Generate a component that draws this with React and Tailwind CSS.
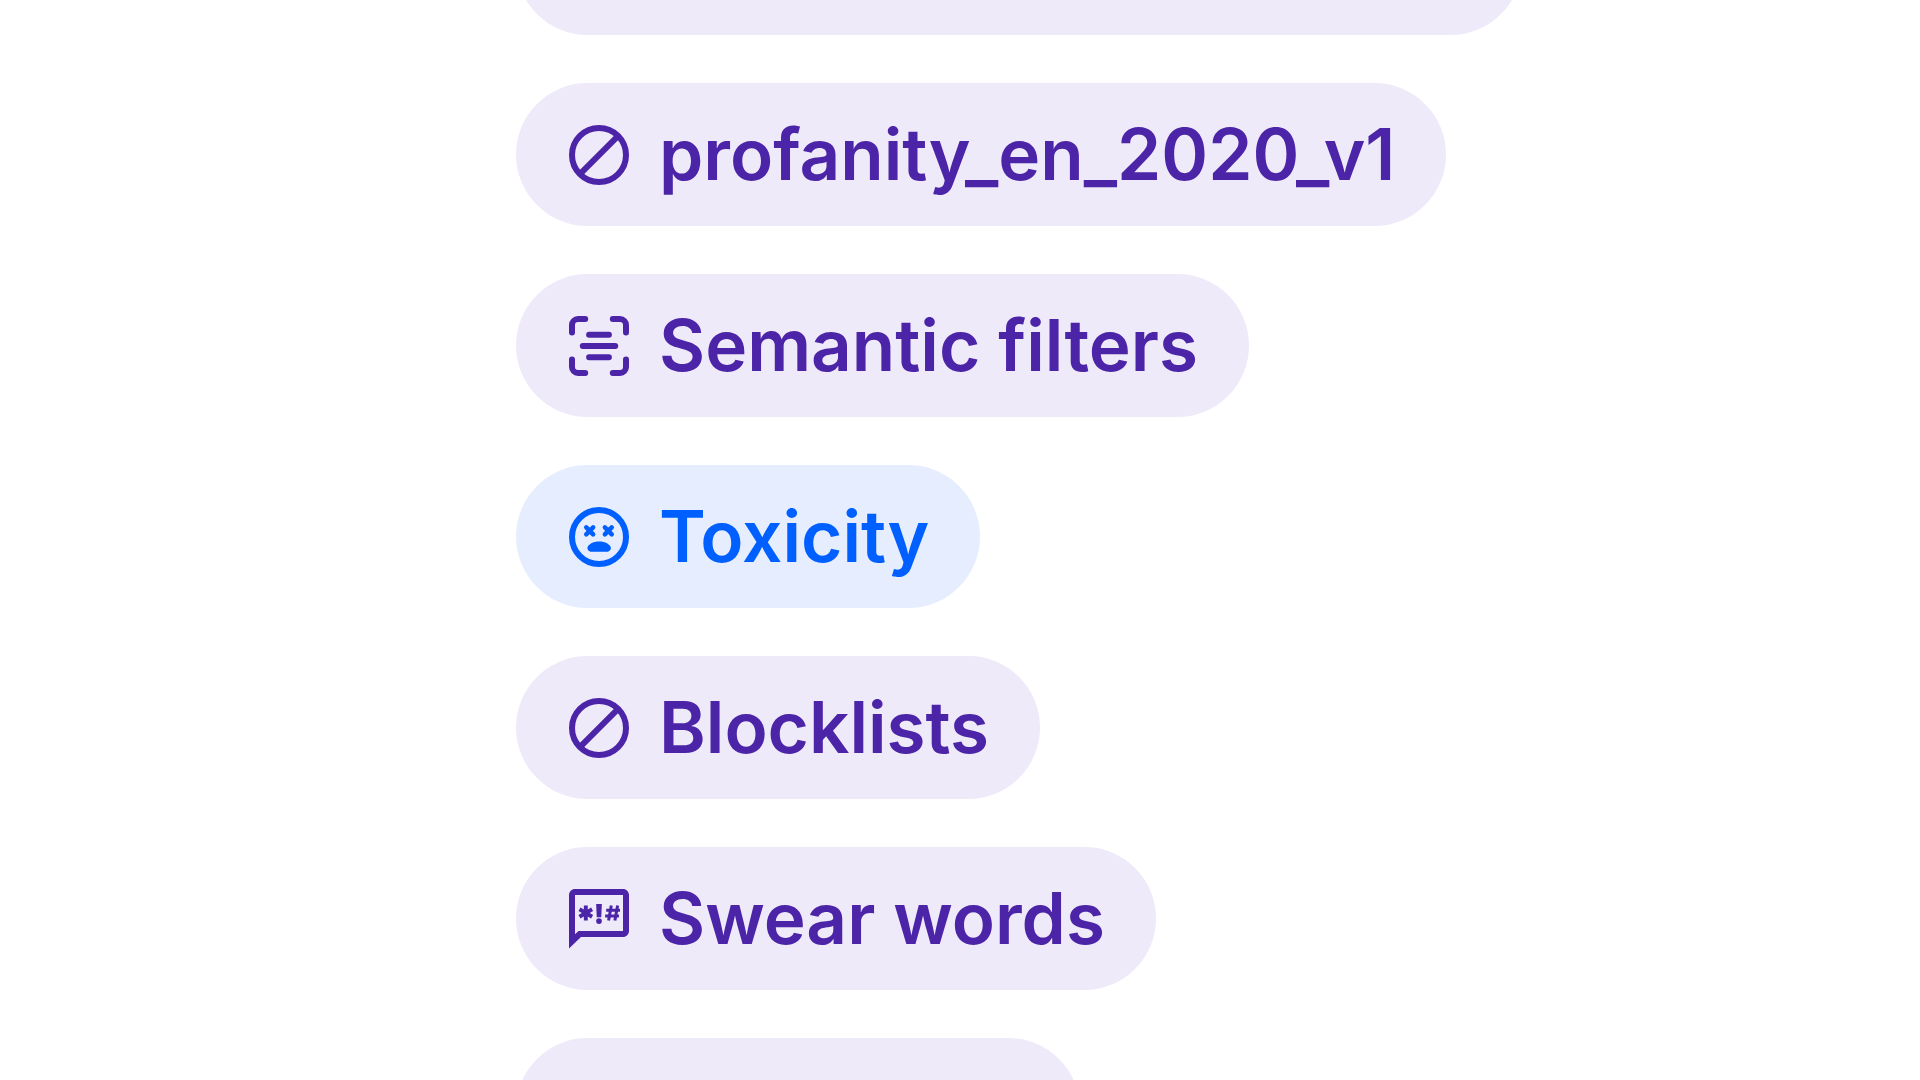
const iconClass = "size-18 shrink-0";

function BlockIcon() {
  return (
    <svg viewBox="0 0 24 24" className={iconClass} fill="none" stroke="currentColor" strokeWidth="2" aria-hidden="true">
      <circle cx="12" cy="12" r="9" />
      <path d="M5.8 18.2 18.2 5.8" />
    </svg>
  );
}

function ScanTextIcon() {
  return (
    <svg viewBox="0 0 24 24" className={iconClass} fill="none" stroke="currentColor" strokeWidth="2" strokeLinecap="round" aria-hidden="true">
      <path d="M3 7.5V5a2 2 0 0 1 2-2h2.4M16.6 3H19a2 2 0 0 1 2 2v2.5M21 16.5V19a2 2 0 0 1-2 2h-2.4M7.4 21H5a2 2 0 0 1-2-2v-2.5" />
      <path d="M8.7 8.25h6.6M6.6 12h10.8M8.7 15.75h6.6" />
    </svg>
  );
}

function ToxicIcon() {
  return (
    <svg viewBox="0 0 24 24" className={iconClass} fill="none" stroke="currentColor" aria-hidden="true">
      <circle cx="12" cy="12" r="9" strokeWidth="2" />
      <path strokeWidth="1.5" strokeLinecap="round" d="m7.75 8.8 2.3 2.3m0-2.3-2.3 2.3M13.95 8.8l2.3 2.3m0-2.3-2.3 2.3" />
      <path
        fill="currentColor"
        stroke="none"
        d="M8.15 15.5c.3-1.1 1.85-2 3.9-2s3.6.9 3.9 2c.1.8-.6 1.45-1.4 1.45h-5c-.8 0-1.5-.65-1.4-1.45Z"
      />
    </svg>
  );
}

function SwearIcon() {
  return (
    <svg viewBox="0 0 24 24" className={iconClass} fill="currentColor" aria-hidden="true">
      <path d="M20 2H4c-1.1 0-2 .9-2 2v17.8L6 18h14c1.1 0 2-.9 2-2V4c0-1.1-.9-2-2-2Zm0 14H5.2L4 17.1V4h16v12Z" />
      <path fill="none" stroke="currentColor" strokeWidth="1.3" d="M7.6 7.5v5M5.5 8.75l4.2 2.5M9.7 8.75l-4.2 2.5" />
      <path d="M11.05 7h1.9l-.2 4.4h-1.5Z" />
      <circle cx="12" cy="12.7" r=".95" />
      <path fill="none" stroke="currentColor" strokeWidth="1" d="m16.1 7.5-.9 5M18.2 7.5l-.9 5M14.4 9.05H19M14.05 11h4.6" />
    </svg>
  );
}

const chips = [
  { id: "above", width: "w-[1006px]" },
  { id: "profanity", label: "profanity_en_2020_v1", Icon: BlockIcon },
  { id: "semantic", label: "Semantic filters", Icon: ScanTextIcon },
  { id: "toxicity", label: "Toxicity", Icon: ToxicIcon, active: true },
  { id: "blocklists", label: "Blocklists", Icon: BlockIcon },
  { id: "swear", label: "Swear words", Icon: SwearIcon },
  { id: "below", width: "w-[564px]" },
];

function Chip({ label, Icon, active, width = "w-auto" }) {
  const tone = active ? "bg-[#e5edff] text-[#005fff]" : "bg-[#eeeaf9] text-[#4c24a8]";
  return (
    <li className={`flex h-[143px] shrink-0 items-center gap-6 rounded-full pl-[47px] pr-[51px] ${width} ${tone}`}>
      {Icon && <Icon />}
      {label && <span className="whitespace-nowrap text-[71px] leading-none font-semibold">{label}</span>}
    </li>
  );
}

export default function App() {
  return (
    <main className="h-screen overflow-hidden bg-white font-['Inter',sans-serif]">
      <ul className="-mt-27 ml-[516px] flex flex-col items-start gap-12">
        {chips.map(({ id, ...chip }) => (
          <Chip key={id} {...chip} />
        ))}
      </ul>
    </main>
  );
}
